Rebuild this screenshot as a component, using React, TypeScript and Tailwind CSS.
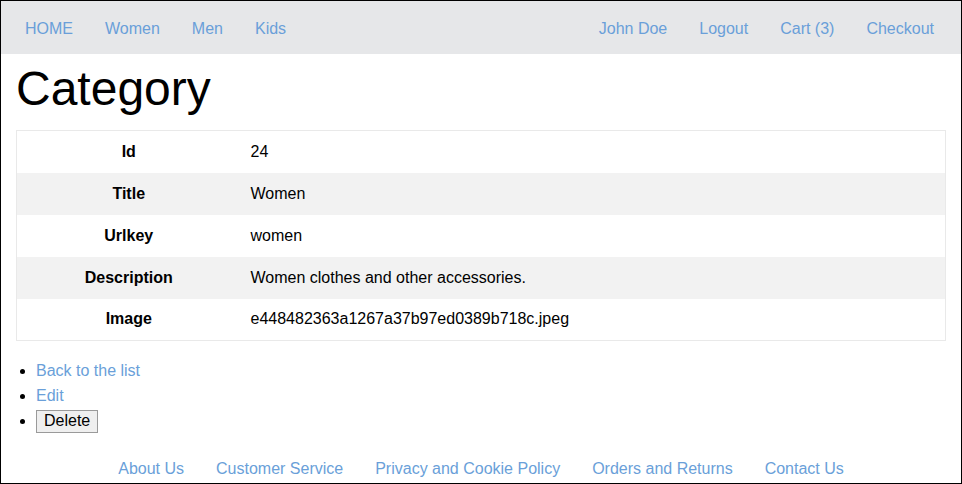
import React from "react";

const leftNav = ["HOME", "Women", "Men", "Kids"];
const rightNav = ["John Doe", "Logout", "Cart (3)", "Checkout"];
const rows = [
  ["Id", "24"],
  ["Title", "Women"],
  ["Urlkey", "women"],
  ["Description", "Women clothes and other accessories."],
  ["Image", "e448482363a1267a37b97ed0389b718c.jpeg"],
];
const footer = ["About Us", "Customer Service", "Privacy and Cookie Policy", "Orders and Returns", "Contact Us"];

export default function App() {
  return (
    <div className="w-[962px] h-[484px] overflow-hidden border border-black bg-white font-['Liberation_Sans',Arial,sans-serif] text-[16px] text-black">
      <nav className="flex h-[53px] items-center justify-between bg-[#e6e7e9] px-2 pt-[2px]">
        <ul className="flex">
          {leftNav.map((l) => (
            <li key={l}>
              <a href="#" className="px-4 text-[#6a9fd9]">{l}</a>
            </li>
          ))}
        </ul>
        <ul className="flex pr-[3px]">
          {rightNav.map((l) => (
            <li key={l}>
              <a href="#" className="px-4 text-[#6a9fd9]">{l}</a>
            </li>
          ))}
        </ul>
      </nav>

      <main className="px-[15px]">
        <h1 className="mt-[11px] mb-[17px] text-[48px] leading-[48px] font-normal">Category</h1>

        <table className="w-[930px] border-collapse border border-[#e9e9e9]">
          <tbody>
            {rows.map(([k, v], i) => (
              <tr key={k} className={`h-[42px] ${i % 2 === 1 ? "bg-[#f2f2f2]" : "bg-white"}`}>
                <th className="w-[224px] text-center font-bold">{k}</th>
                <td className="pl-[10px] text-left">{v}</td>
              </tr>
            ))}
          </tbody>
        </table>

        <ul className="mt-[17px] list-disc pl-5">
          <li className="leading-[25px]">
            <a href="#" className="text-[#6a9fd9]">Back to the list</a>
          </li>
          <li className="leading-[25px]">
            <a href="#" className="text-[#6a9fd9]">Edit</a>
          </li>
          <li className="leading-[25px]">
            <button type="button" className="h-[23px] border border-[#9a9a9a] bg-[#efefef] px-[7px] text-[16px] leading-[20px]">
              Delete
            </button>
          </li>
        </ul>
      </main>

      <footer className="mt-[24px] flex justify-center">
        {footer.map((l) => (
          <a key={l} href="#" className="px-4 text-[#6a9fd9]">{l}</a>
        ))}
      </footer>
    </div>
  );
}
